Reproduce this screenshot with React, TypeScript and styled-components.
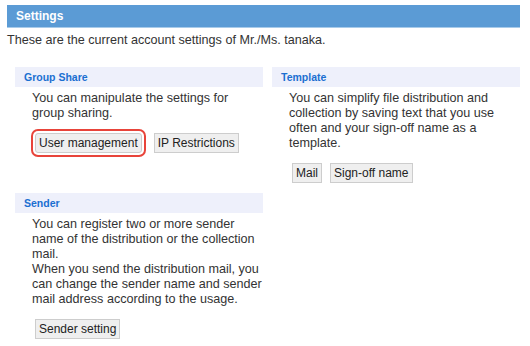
import React from "react";
import styled, { createGlobalStyle } from "styled-components";

const GlobalStyle = createGlobalStyle`
  body {
    margin: 0;
    background: #fff;
    font-family: "Liberation Sans", Arial, Helvetica, sans-serif;
    color: #333;
  }
`;

type Section = {
  title: string;
  lines: string[];
  buttons: { label: string; focused?: boolean }[];
};

// lines are broken where the original page wraps them
const sections: Section[] = [
  {
    title: "Group Share",
    lines: ["You can manipulate the settings for", "group sharing."],
    buttons: [{ label: "User management", focused: true }, { label: "IP Restrictions" }],
  },
  {
    title: "Template",
    lines: [
      "You can simplify file distribution and",
      "collection by saving text that you use",
      "often and your sign-off name as a",
      "template.",
    ],
    buttons: [{ label: "Mail" }, { label: "Sign-off name" }],
  },
  {
    title: "Sender",
    lines: [
      "You can register two or more sender",
      "name of the distribution or the collection",
      "mail.",
      "When you send the distribution mail, you",
      "can change the sender name and sender",
      "mail address according to the usage.",
    ],
    buttons: [{ label: "Sender setting" }],
  },
];

const App: React.FC = () => {
  return (
    <Page>
      <GlobalStyle />
      <TitleBar>Settings</TitleBar>
      <Intro>These are the current account settings of Mr./Ms. tanaka.</Intro>
      <Grid>
        {sections.map((s) => (
          <Panel key={s.title}>
            <PanelHead>{s.title}</PanelHead>
            <PanelText>
              {s.lines.map((line, i) => (
                <React.Fragment key={i}>
                  {i > 0 && <br />}
                  {line}
                </React.Fragment>
              ))}
            </PanelText>
            <ButtonRow>
              {s.buttons.map((b) => (
                <Btn key={b.label} $focused={b.focused}>
                  {b.label}
                </Btn>
              ))}
            </ButtonRow>
          </Panel>
        ))}
      </Grid>
    </Page>
  );
};

const Page = styled.div`
  width: 513px;
  padding: 5px 0 0 7px;
`;
const TitleBar = styled.div`
  height: 22px;
  line-height: 23px;
  padding-left: 9px;
  background: #5b9bd5;
  border-bottom: 1px solid #a8cbea;
  color: #fff;
  font-size: 12px;
  font-weight: bold;
`;
const Intro = styled.p`
  margin: 5px 0 0;
  font-size: 12.6px;
  line-height: 15px;
`;
const Grid = styled.div`
  display: grid;
  grid-template-columns: 248px 248px;
  column-gap: 9px;
  row-gap: 10px;
  align-items: start;
  margin: 19px 0 0 8px;
`;
const Panel = styled.section`
  display: flex;
  flex-direction: column;
`;
const PanelHead = styled.h3`
  margin: 0;
  height: 20px;
  line-height: 20px;
  padding-left: 9px;
  background: #eef0fb;
  color: #1b6fd1;
  font-size: 10.5px;
  font-weight: bold;
`;
const PanelText = styled.p`
  margin: 4px 0 0 17px;
  white-space: nowrap;
  font-size: 12.6px;
  line-height: 15px;
`;
const ButtonRow = styled.div`
  display: flex;
  gap: 8px;
  margin: 12px 0 0 20px;
`;
const Btn = styled.button<{ $focused?: boolean }>`
  height: 20px;
  padding: 0 3px;
  margin-right: ${(p) => (p.$focused ? "4px" : "0")};
  background: #efefef;
  border: 1px solid #cdcdcd;
  border-radius: ${(p) => (p.$focused ? "3px" : "0")};
  box-shadow: ${(p) =>
    p.$focused ? "0 0 0 2px #fff, 0 0 0 4px #e8443a" : "none"};
  color: #222;
  font-family: inherit;
  font-size: 12px;
  line-height: 16px;
`;

export default App;
